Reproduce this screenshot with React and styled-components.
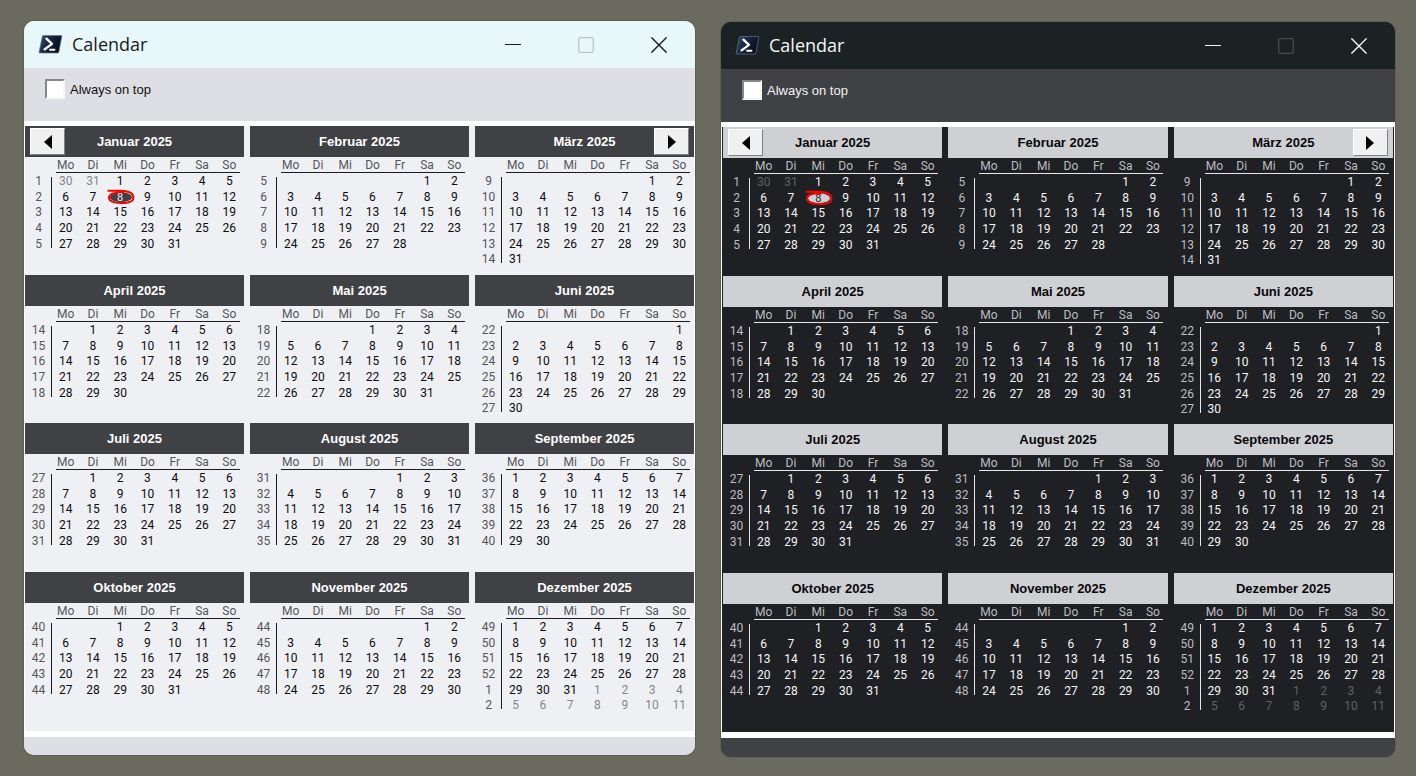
import React, { useState } from "react";
import styled, { createGlobalStyle, ThemeProvider } from "styled-components";

const GlobalStyle = createGlobalStyle`
  *, *::before, *::after { box-sizing: border-box; }
  body {
    margin: 0;
    background: #6a6b5e;
    font-family: Roboto, "Liberation Sans", sans-serif;
  }
`;

const light = {
  id: "light",
  titleBar: "#e8f7f9",
  titleText: "#1b1b1b",
  disabled: "#b9c5c7",
  panel: "#dedfe4",
  panelText: "#111111",
  frame: "#ffffff",
  calendar: "#eff0f3",
  heading: "#404144",
  headingText: "#ffffff",
  muted: "#55565a",
  day: "#0c0c0e",
  trailing: "#85868a",
  rule: "#1d1d20",
  sides: 0,
  footer: 18,
};

const dark = {
  id: "dark",
  titleBar: "#1a2224",
  titleText: "#f5f5f5",
  disabled: "#454d4f",
  panel: "#404145",
  panelText: "#f2f2f2",
  frame: "#ffffff",
  calendar: "#1f2024",
  heading: "#cfd0d4",
  headingText: "#08080a",
  muted: "#bcbdc0",
  day: "#f4f4f5",
  trailing: "#5f6064",
  rule: "#e8e8ea",
  sides: 1,
  footer: 19,
};

const Desktop = styled.main`
  display: grid;
  grid-template-columns: 671fr 674fr;
  align-items: start;
  gap: 26px;
  padding: 21px 21px 19px 24px;
`;

const Window = styled.section`
  display: flex;
  flex-direction: column;
  margin-top: ${(p) => p.theme.sides}px;
  border-radius: 10px;
  overflow: hidden;
  background: ${(p) => p.theme.panel};
  box-shadow: 0 0 0 1px rgba(70, 72, 64, 0.35);
`;

const TitleBar = styled.header`
  display: flex;
  align-items: center;
  height: 47px;
  padding-left: 14px;
  background: ${(p) => p.theme.titleBar};
  color: ${(p) => p.theme.titleText};
`;

const AppName = styled.h1`
  flex: 1;
  margin: 0 0 0 9px;
  padding-bottom: 2px;
  font: 400 18px/24px "Open Sans", "Noto Sans", sans-serif;
`;

const CaptionButton = styled.button`
  display: flex;
  align-items: center;
  justify-content: center;
  width: 73px;
  height: 47px;
  padding: 0;
  border: 0;
  background: none;
  color: ${(p) => (p.disabled ? p.theme.disabled : p.theme.titleText)};
`;

const Toolbar = styled.div`
  height: 53px;
  padding: 11px 21px;
  background: ${(p) => p.theme.panel};
`;

const Option = styled.label`
  display: inline-flex;
  align-items: flex-start;
  gap: 5px;
  color: ${(p) => p.theme.panelText};
  font-family: "Liberation Sans", Arial, sans-serif;
  font-size: 13px;
  line-height: 22px;
`;

const CheckBox = styled.input`
  appearance: none;
  width: 20px;
  height: 20px;
  margin: 0;
  border: 2px solid;
  border-color: #86878a #f6f6f7 #f6f6f7 #86878a;
  background: #ffffff;
  &:checked { background: #404144; }
`;

const Year = styled.div`
  display: grid;
  grid-template-columns: repeat(3, 1fr);
  grid-template-rows: 149px 148px 149px 159px;
  column-gap: 6px;
  border: solid ${(p) => p.theme.frame};
  border-width: 5px 1px 6px;
  padding: 0 ${(p) => p.theme.sides}px;
  background: ${(p) => p.theme.calendar};
`;

const MonthPanel = styled.section`
  min-width: 0;
`;

const MonthBar = styled.div`
  display: grid;
  grid-template-columns: 35px 1fr 35px;
  align-items: center;
  height: 31px;
  padding: 0 5px;
  background: ${(p) => p.theme.heading};
`;

const MonthName = styled.h2`
  grid-column: 2;
  margin: 0;
  color: ${(p) => p.theme.headingText};
  font: 700 13px/20px "Liberation Sans", Arial, sans-serif;
  text-align: center;
`;

const PageButton = styled.button`
  grid-row: 1;
  grid-column: ${(p) => (p.$next ? 3 : 1)};
  display: flex;
  align-items: center;
  justify-content: center;
  height: 27px;
  padding: 0;
  border: 1px solid;
  border-color: #ffffff #808184 #808184 #ffffff;
  background: #f0f0f1;
  color: #000000;
`;

const Days = styled.table`
  width: 100%;
  padding-right: 1px;
  border-spacing: 0;
  table-layout: fixed;
  font-size: 12px;
  line-height: 15px;
  text-align: center;
`;

const WeekColumn = styled.col`
  width: 27px;
`;

const WeekdayHead = styled.thead`
  background: linear-gradient(${(p) => p.theme.rule}, ${(p) => p.theme.rule}) no-repeat
    31px 100% / calc(100% - 34px) 1px;
`;

const Weekday = styled.th`
  height: 16px;
  padding: 1px 0 0;
  color: ${(p) => p.theme.muted};
  font-size: 12px;
  font-weight: 400;
  line-height: 15px;
`;

const Weeks = styled.tbody`
  background: linear-gradient(${(p) => p.theme.rule}, ${(p) => p.theme.rule}) no-repeat
    26px 4px / 1px calc(100% - 8px);
`;

const Week = styled.tr`
  height: 16px;
  &:nth-child(3n) { height: 15px; }
`;

const WeekNumber = styled.th`
  padding: 0;
  color: ${(p) => p.theme.muted};
  font-weight: 400;
`;

const Day = styled.td`
  position: relative;
  padding: 0;
  color: ${(p) => (p.$trailing ? p.theme.trailing : p.theme.day)};
`;

const TodayNumber = styled.span`
  position: relative;
  color: ${(p) => p.theme.calendar};
  font-size: 11px;
`;

const TodayRing = styled.svg`
  position: absolute;
  top: 0;
  left: 0;
  width: 28px;
  height: 16px;
`;

const StatusBar = styled.footer`
  height: ${(p) => p.theme.footer}px;
  background: ${(p) => p.theme.panel};
`;

const MONTHS = [
  "Januar", "Februar", "März", "April", "Mai", "Juni",
  "Juli", "August", "September", "Oktober", "November", "Dezember",
];
const WEEKDAYS = ["Mo", "Di", "Mi", "Do", "Fr", "Sa", "So"];
const YEAR = 2025;

function isoWeek(monday) {
  const thursday = new Date(Date.UTC(monday.getUTCFullYear(), monday.getUTCMonth(), monday.getUTCDate() + 3));
  const start = Date.UTC(thursday.getUTCFullYear(), 0, 1);
  return Math.floor((thursday - start) / 86400000 / 7) + 1;
}

/* Days outside the month are listed only before January and after December. */
function weeksOf(month) {
  const offset = (new Date(Date.UTC(YEAR, month, 1)).getUTCDay() + 6) % 7;
  const length = new Date(Date.UTC(YEAR, month + 1, 0)).getUTCDate();
  const count = month === 11 ? 6 : Math.ceil((offset + length) / 7);
  return Array.from({ length: count }, (_, w) => {
    const first = w * 7 - offset + 1;
    return {
      number: isoWeek(new Date(Date.UTC(YEAR, month, first))),
      days: WEEKDAYS.map((_, d) => {
        const n = first + d;
        const outside = n < 1 || n > length;
        const listed = !outside || (month === 0 && n < 1) || (month === 11 && n > length);
        return {
          label: listed ? new Date(Date.UTC(YEAR, month, n)).getUTCDate() : "",
          outside,
          today: month === 0 && n === 8,
        };
      }),
    };
  });
}

function ShellIcon({ id }) {
  const fill = `shell-${id}`;
  return (
    <svg width="25" height="20" viewBox="0 0 25 20" aria-hidden="true">
      <defs>
        <linearGradient id={fill} x1="0" y1="0.2" x2="1" y2="0.6">
          <stop offset="0" stopColor="#2f4a6a" />
          <stop offset="0.5" stopColor="#14213a" />
          <stop offset="1" stopColor="#080e1a" />
        </linearGradient>
      </defs>
      <path
        d="M5.3 .5H23.2Q24 .5 23.8 1.3L20.8 17.2Q20.6 18 19.7 18H1.7Q.9 18 1.1 17.2L4.4 1.2Q4.6 .5 5.3 .5Z"
        fill={`url(#${fill})`}
        stroke="#5b7592"
        strokeWidth="0.7"
      />
      <path d="M8.4 3.6L14 8.8L6.6 14.4" fill="none" stroke="#fff" strokeWidth="2.3" strokeLinecap="round" strokeLinejoin="round" />
      <path d="M12.2 14.8H16.4" stroke="#fff" strokeWidth="2.1" strokeLinecap="round" />
    </svg>
  );
}

function Today({ label, theme }) {
  return (
    <>
      <TodayRing viewBox="0 0 28 16" aria-hidden="true">
        <ellipse cx="14" cy="8.3" rx="11" ry="5" fill={theme.heading} />
        <path
          d="M.5 1.8H13C22 2 26.4 4.9 26.4 8.4C26.4 12 21.5 14 14.2 14C7 14 2 12 2 8.6C2 5.4 7.2 3.2 17 3.2"
          fill="none"
          stroke="#ff0000"
          strokeWidth="2"
        />
      </TodayRing>
      <TodayNumber>{label}</TodayNumber>
    </>
  );
}

function Month({ index, theme }) {
  return (
    <MonthPanel>
      <MonthBar>
        {index === 0 && (
          <PageButton type="button" aria-label="Previous">
            <svg width="8" height="14" viewBox="0 0 8 14"><path d="M8 0V14L0 7Z" fill="currentColor" /></svg>
          </PageButton>
        )}
        <MonthName>{MONTHS[index]} {YEAR}</MonthName>
        {index === 2 && (
          <PageButton type="button" aria-label="Next" $next>
            <svg width="8" height="14" viewBox="0 0 8 14"><path d="M0 0V14L8 7Z" fill="currentColor" /></svg>
          </PageButton>
        )}
      </MonthBar>
      <Days>
        <colgroup>
          <WeekColumn />
          {WEEKDAYS.map((d) => <col key={d} />)}
        </colgroup>
        <WeekdayHead>
          <tr>
            <Weekday as="td" />
            {WEEKDAYS.map((d) => <Weekday key={d} scope="col">{d}</Weekday>)}
          </tr>
        </WeekdayHead>
        <Weeks>
          {weeksOf(index).map((week) => (
            <Week key={week.number}>
              <WeekNumber scope="row">{week.number}</WeekNumber>
              {week.days.map((day, i) => (
                <Day key={i} $trailing={day.outside}>
                  {day.today ? <Today label={day.label} theme={theme} /> : day.label}
                </Day>
              ))}
            </Week>
          ))}
        </Weeks>
      </Days>
    </MonthPanel>
  );
}

function CalendarWindow({ theme }) {
  const [onTop, setOnTop] = useState(false);
  const inputId = `on-top-${theme.id}`;
  return (
    <ThemeProvider theme={theme}>
      <Window>
        <TitleBar>
          <ShellIcon id={theme.id} />
          <AppName>Calendar</AppName>
          <CaptionButton type="button" aria-label="Minimize">
            <svg width="16" height="16" viewBox="0 0 16 16"><path d="M0 7.5H16" stroke="currentColor" strokeWidth="1.2" /></svg>
          </CaptionButton>
          <CaptionButton type="button" aria-label="Maximize" disabled>
            <svg width="16" height="16" viewBox="0 0 16 16"><rect x="0.7" y="0.7" width="14.6" height="14.6" rx="1.5" fill="none" stroke="currentColor" strokeWidth="1.3" /></svg>
          </CaptionButton>
          <CaptionButton type="button" aria-label="Close">
            <svg width="16" height="16" viewBox="0 0 16 16"><path d="M.4 .4L15.6 15.6M15.6 .4L.4 15.6" stroke="currentColor" strokeWidth="1.4" /></svg>
          </CaptionButton>
        </TitleBar>
        <Toolbar>
          <Option htmlFor={inputId}>
            <CheckBox id={inputId} type="checkbox" checked={onTop} onChange={(e) => setOnTop(e.target.checked)} />
            Always on top
          </Option>
        </Toolbar>
        <Year>
          {MONTHS.map((name, i) => <Month key={name} index={i} theme={theme} />)}
        </Year>
        <StatusBar />
      </Window>
    </ThemeProvider>
  );
}

export default function App() {
  return (
    <>
      <GlobalStyle />
      <Desktop>
        <CalendarWindow theme={light} />
        <CalendarWindow theme={dark} />
      </Desktop>
    </>
  );
}
